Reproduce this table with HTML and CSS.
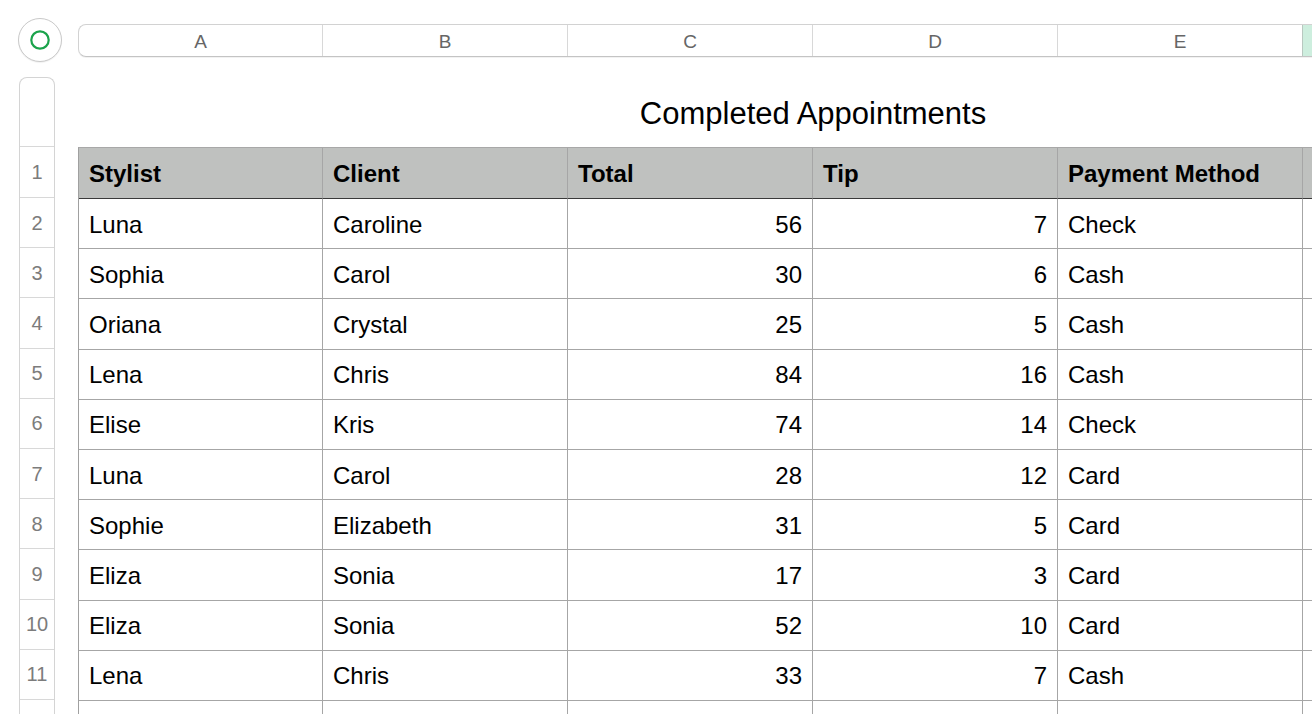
FILE: index.html
```html
<!DOCTYPE html>
<html>
<head>
<meta charset="utf-8">
<link rel="stylesheet" href="styles.css">
</head>
<body>
<div class="app">
  <div class="top">
    <div class="corner">
      <div class="corner-btn">
        <svg width="22" height="22" viewBox="0 0 22 22"><circle cx="11" cy="11" r="8.7" fill="none" stroke="#1ba34b" stroke-width="2.2"/></svg>
      </div>
    </div>
    <div class="colbar">
      <div class="colhead">A</div>
      <div class="colhead">B</div>
      <div class="colhead">C</div>
      <div class="colhead">D</div>
      <div class="colhead">E</div>
      <div class="colhead sel"></div>
    </div>
  </div>
  <div class="main">
    <div class="rowheads">
      <div class="rh rh-title"></div>
      <div class="rh rh-head">1</div>
      <div class="rh">2</div>
      <div class="rh">3</div>
      <div class="rh">4</div>
      <div class="rh">5</div>
      <div class="rh">6</div>
      <div class="rh">7</div>
      <div class="rh">8</div>
      <div class="rh">9</div>
      <div class="rh">10</div>
      <div class="rh">11</div>
      <div class="rh"></div>
    </div>
    <div class="sheet">
      <div class="title">Completed Appointments</div>
      <div class="table">
        <div class="c h">Stylist</div><div class="c h">Client</div><div class="c h">Total</div><div class="c h">Tip</div><div class="c h">Payment Method</div><div class="c h"></div>
        <div class="c">Luna</div><div class="c">Caroline</div><div class="c num">56</div><div class="c num">7</div><div class="c">Check</div><div class="c"></div>
        <div class="c">Sophia</div><div class="c">Carol</div><div class="c num">30</div><div class="c num">6</div><div class="c">Cash</div><div class="c"></div>
        <div class="c">Oriana</div><div class="c">Crystal</div><div class="c num">25</div><div class="c num">5</div><div class="c">Cash</div><div class="c"></div>
        <div class="c">Lena</div><div class="c">Chris</div><div class="c num">84</div><div class="c num">16</div><div class="c">Cash</div><div class="c"></div>
        <div class="c">Elise</div><div class="c">Kris</div><div class="c num">74</div><div class="c num">14</div><div class="c">Check</div><div class="c"></div>
        <div class="c">Luna</div><div class="c">Carol</div><div class="c num">28</div><div class="c num">12</div><div class="c">Card</div><div class="c"></div>
        <div class="c">Sophie</div><div class="c">Elizabeth</div><div class="c num">31</div><div class="c num">5</div><div class="c">Card</div><div class="c"></div>
        <div class="c">Eliza</div><div class="c">Sonia</div><div class="c num">17</div><div class="c num">3</div><div class="c">Card</div><div class="c"></div>
        <div class="c">Eliza</div><div class="c">Sonia</div><div class="c num">52</div><div class="c num">10</div><div class="c">Card</div><div class="c"></div>
        <div class="c">Lena</div><div class="c">Chris</div><div class="c num">33</div><div class="c num">7</div><div class="c">Cash</div><div class="c"></div>
        <div class="c"></div><div class="c"></div><div class="c"></div><div class="c"></div><div class="c"></div><div class="c"></div>
      </div>
    </div>
  </div>
</div>
</body>
</html>
```
FILE: styles.css
```css
* { box-sizing: border-box; }
html, body { margin: 0; padding: 0; background: #fff; }
body {
  font-family: "Liberation Sans", Arial, Helvetica, sans-serif;
  color: #000;
  width: 1312px;
  height: 714px;
  overflow: hidden;
}
.app { width: 1312px; height: 714px; overflow: hidden; }

.top {
  display: flex;
  align-items: flex-start;
  height: 77px;
}
.corner {
  width: 78px;
  flex: none;
  padding: 18px 0 0 18px;
}
.corner-btn {
  width: 44px;
  height: 44px;
  border-radius: 50%;
  border: 1px solid #c9c9c9;
  box-shadow: 0 1px 1px rgba(0,0,0,0.06);
  display: flex;
  align-items: center;
  justify-content: center;
  background: #fff;
}
.corner-btn svg { display: block; }

.colbar {
  margin-top: 24px;
  display: grid;
  grid-template-columns: 244px repeat(5, 245px);
  height: 33px;
  border: 1px solid #d2d2d2;
  border-bottom-color: #c4c4c4;
  border-right: none;
  border-radius: 8px 0 0 8px;
  box-shadow: 0 1px 0 rgba(0,0,0,0.05);
  flex: none;
}
.colhead {
  border-right: 1px solid #d8d8d8;
  display: flex;
  align-items: center;
  justify-content: center;
  font-size: 19px;
  color: #666;
  padding-top: 2px;
}
.colhead.sel {
  background: #cdeede;
  border-left: 1px solid #b8c8c0;
  margin-left: -1px;
}

.main {
  display: flex;
  align-items: flex-start;
}
.rowheads {
  margin-left: 19px;
  width: 36px;
  flex: none;
  border: 1px solid #d4d4d4;
  border-bottom: none;
  border-radius: 8px 8px 0 0;
  display: flex;
  flex-direction: column;
}
.rh {
  height: 50.2px;
  border-bottom: 1px solid #d8d8d8;
  display: flex;
  align-items: center;
  justify-content: center;
  font-size: 20px;
  color: #7c7c7c;
  padding-top: 1px;
}
.rh-title { height: 69px; }
.rh-head { height: 51px; }

.sheet {
  margin-left: 23px;
  flex: none;
  width: 1470px;
}
.title {
  height: 70px;
  display: flex;
  align-items: center;
  justify-content: center;
  font-size: 31px;
  padding-top: 4px;
}
.table {
  display: grid;
  grid-template-columns: 244px repeat(5, 245px);
  grid-template-rows: 51px;
  grid-auto-rows: 50.2px;
  border-top: 1px solid #a8a8a8;
  border-left: 1px solid #a0a0a0;
}
.c {
  border-right: 1px solid #a6a6a6;
  border-bottom: 1px solid #a6a6a6;
  display: flex;
  align-items: center;
  padding: 2px 10px 0 10px;
  font-size: 24px;
  white-space: nowrap;
  overflow: hidden;
}
.c.h {
  background: #bfc1bf;
  font-weight: bold;
  border-bottom-color: #3a3a3a;
}
.c.num { justify-content: flex-end; }
```
